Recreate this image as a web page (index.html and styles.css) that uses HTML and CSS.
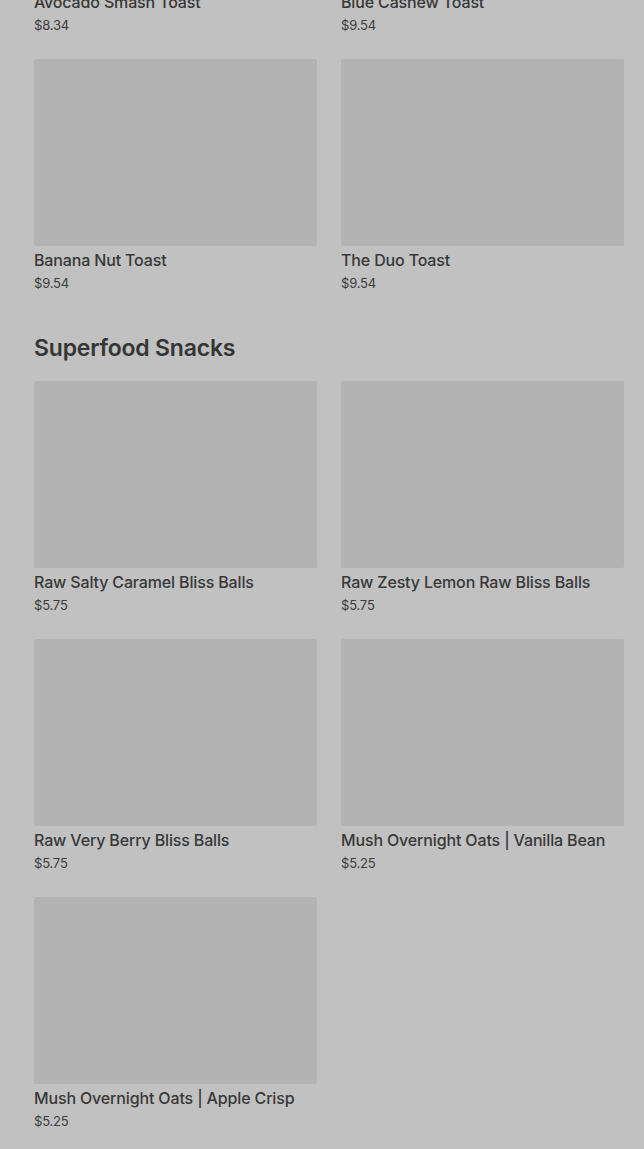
FILE: index.html
```html
<!DOCTYPE html>
<html lang="en">
<head>
    <meta charset="UTF-8">
    <meta name="viewport" content="width=device-width, initial-scale=1.0">
    <title>Menu</title>
    <link rel="stylesheet" href="styles.css">
</head>
<body>
    <div class="menu">
        <section class="section">
            <div class="grid">
                <div class="item">
                    <div class="thumb"></div>
                    <div class="name">Avocado Smash Toast</div>
                    <div class="price">$8.34</div>
                </div>
                <div class="item">
                    <div class="thumb"></div>
                    <div class="name">Blue Cashew Toast</div>
                    <div class="price">$9.54</div>
                </div>
                <div class="item">
                    <div class="thumb"></div>
                    <div class="name">Banana Nut Toast</div>
                    <div class="price">$9.54</div>
                </div>
                <div class="item">
                    <div class="thumb"></div>
                    <div class="name">The Duo Toast</div>
                    <div class="price">$9.54</div>
                </div>
            </div>
        </section>

        <section class="section">
            <h2 class="section-title">Superfood Snacks</h2>
            <div class="grid">
                <div class="item">
                    <div class="thumb"></div>
                    <div class="name">Raw Salty Caramel Bliss Balls</div>
                    <div class="price">$5.75</div>
                </div>
                <div class="item">
                    <div class="thumb"></div>
                    <div class="name">Raw Zesty Lemon Raw Bliss Balls</div>
                    <div class="price">$5.75</div>
                </div>
                <div class="item">
                    <div class="thumb"></div>
                    <div class="name">Raw Very Berry Bliss Balls</div>
                    <div class="price">$5.75</div>
                </div>
                <div class="item">
                    <div class="thumb"></div>
                    <div class="name">Mush Overnight Oats | Vanilla Bean</div>
                    <div class="price">$5.25</div>
                </div>
                <div class="item">
                    <div class="thumb"></div>
                    <div class="name">Mush Overnight Oats | Apple Crisp</div>
                    <div class="price">$5.25</div>
                </div>
            </div>
        </section>
    </div>
</body>
</html>
```

FILE: styles.css
```css
body {
    margin: 0;
    background-color: #c1c1c1;
    color: #383838;
    font-family: Inter, "Noto Sans", sans-serif;
    overflow: hidden;
}
/* the list is scrolled part way down the toast section */
.menu {
    margin-top: -199px;
    padding: 0 20px 0 34px;
}
.section {
    margin-bottom: 40px;
}
.section-title {
    margin: 0 0 17px;
    font-size: 23px;
    line-height: 32px;
    font-weight: 600;
    letter-spacing: -0.2px;
    color: #353535;
}
.grid {
    display: grid;
    grid-template-columns: 283px 283px;
    column-gap: 24px;
    row-gap: 25px;
}
.thumb {
    height: 187px;
    background-color: #b3b3b3;
    border-radius: 2px;
}
.name {
    margin-top: 4px;
    font-size: 16px;
    line-height: 20px;
    font-weight: 500;
    letter-spacing: -0.15px;
    white-space: nowrap;
}
.price {
    margin-top: 4px;
    font-size: 13px;
    line-height: 18px;
    letter-spacing: -0.2px;
    color: #3c3c3c;
}
```
